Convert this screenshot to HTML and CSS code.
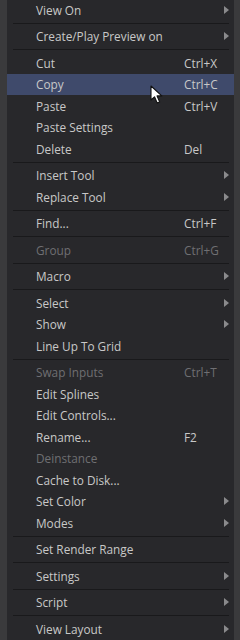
FILE: index.html
```html
<!DOCTYPE html>
<html lang="en">
<head>
    <meta charset="UTF-8">
    <meta name="viewport" content="width=device-width, initial-scale=1.0">
    <title>Flow Context Menu</title>
    <link rel="stylesheet" href="styles.css">
</head>
<body>
    <div class="menu">
        <div class="item sub"><span class="label">View On</span></div>
        <div class="sep"></div>
        <div class="item sub"><span class="label">Create/Play Preview on</span></div>
        <div class="sep"></div>
        <div class="item"><span class="label">Cut</span><span class="key">Ctrl+X</span></div>
        <div class="item active"><span class="label">Copy</span><span class="key">Ctrl+C</span>
            <!-- mouse pointer -->
            <svg class="cursor" width="14" height="20" viewBox="0 0 14 20">
                <path d="M1 1 L1 15 L4.5 11.8 L7.2 18 L9.6 16.9 L7 10.9 L11.8 10.9 Z" fill="#fff" stroke="#111" stroke-width="1.1" stroke-linejoin="round"/>
            </svg>
        </div>
        <div class="item"><span class="label">Paste</span><span class="key">Ctrl+V</span></div>
        <div class="item"><span class="label">Paste Settings</span></div>
        <div class="item"><span class="label">Delete</span><span class="key">Del</span></div>
        <div class="sep"></div>
        <div class="item sub"><span class="label">Insert Tool</span></div>
        <div class="item sub"><span class="label">Replace Tool</span></div>
        <div class="sep"></div>
        <div class="item"><span class="label">Find...</span><span class="key">Ctrl+F</span></div>
        <div class="sep"></div>
        <div class="item disabled"><span class="label">Group</span><span class="key">Ctrl+G</span></div>
        <div class="sep"></div>
        <div class="item sub"><span class="label">Macro</span></div>
        <div class="sep"></div>
        <div class="item sub"><span class="label">Select</span></div>
        <div class="item sub"><span class="label">Show</span></div>
        <div class="item"><span class="label">Line Up To Grid</span></div>
        <div class="sep"></div>
        <div class="item disabled"><span class="label">Swap Inputs</span><span class="key">Ctrl+T</span></div>
        <div class="item"><span class="label">Edit Splines</span></div>
        <div class="item"><span class="label">Edit Controls...</span></div>
        <div class="item"><span class="label">Rename...</span><span class="key">F2</span></div>
        <div class="item disabled"><span class="label">Deinstance</span></div>
        <div class="item"><span class="label">Cache to Disk...</span></div>
        <div class="item sub"><span class="label">Set Color</span></div>
        <div class="item sub"><span class="label">Modes</span></div>
        <div class="sep"></div>
        <div class="item"><span class="label">Set Render Range</span></div>
        <div class="sep"></div>
        <div class="item sub"><span class="label">Settings</span></div>
        <div class="sep"></div>
        <div class="item sub"><span class="label">Script</span></div>
        <div class="sep"></div>
        <div class="item sub"><span class="label">View Layout</span></div>
    </div>
</body>
</html>
```

FILE: styles.css
```css
body {
    margin: 0;
    background-color: #3a3a3c;
    font-family: "Open Sans", "Noto Sans", sans-serif;
    font-size: 11.8px;
    color: #c8c8c8;
    overflow: hidden;
}

.menu {
    margin: -1px 6px 0 7px;
    background-color: #28282b;
    min-height: 660px;
}

.item {
    position: relative;
    display: flex;
    align-items: center;
    height: 21.5px;
    padding-left: 29px;
    padding-right: 5px;
}

.label {
    width: 148px;
    white-space: nowrap;
}

.key {
    white-space: nowrap;
}

/* submenu arrow */
.sub::after {
    content: "";
    margin-left: auto;
    border-left: 5px solid #8a8a8c;
    border-top: 4px solid transparent;
    border-bottom: 4px solid transparent;
}

.active {
    background-color: #3f4a6b;
}

.disabled {
    color: #6f6f72;
}

.sep {
    height: 5px;
    display: flex;
    align-items: center;
    margin: 0 5px 0 6px;
}

.sep::before {
    content: "";
    flex: 1;
    height: 1px;
    background-color: #19191b;
}

.cursor {
    position: absolute;
    left: 143px;
    top: 11px;
}
```
